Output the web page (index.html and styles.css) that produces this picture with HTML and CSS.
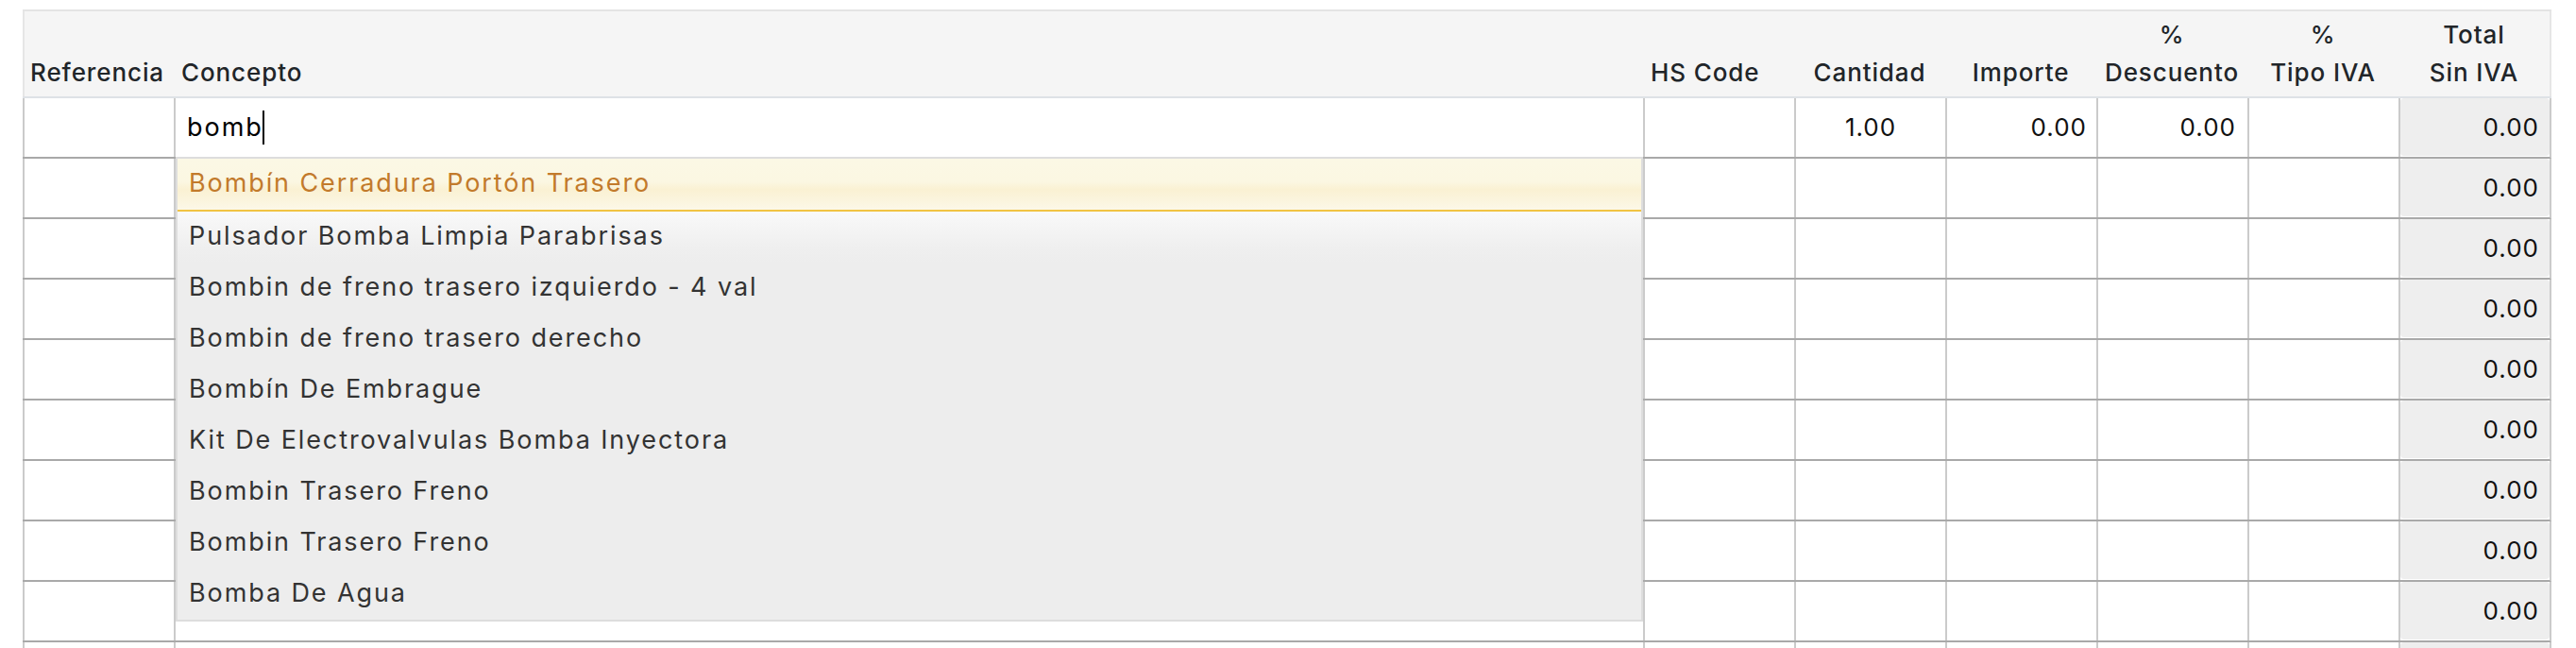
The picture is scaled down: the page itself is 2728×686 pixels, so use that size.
FILE: index.html
```html
<!DOCTYPE html>
<html lang="es">
<head>
<meta charset="utf-8">
<title>Líneas</title>
<link rel="stylesheet" href="styles.css">
</head>
<body>
<div class="page">
  <div class="grid head">
    <div class="th left">Referencia</div>
    <div class="th left">Concepto</div>
    <div class="th left">HS Code</div>
    <div class="th">Cantidad</div>
    <div class="th">Importe</div>
    <div class="th">%<br>Descuento</div>
    <div class="th">%<br>Tipo IVA</div>
    <div class="th">Total<br>Sin IVA</div>
  </div>

  <div class="grid row">
    <div class="td"></div>
    <div class="td concept">
      <span class="typed">bomb</span><span class="caret"></span>
      <ul class="dropdown">
        <li class="opt active">Bombín Cerradura Portón Trasero</li>
        <li class="opt next">Pulsador Bomba Limpia Parabrisas</li>
        <li class="opt">Bombin de freno trasero izquierdo - 4 val</li>
        <li class="opt">Bombin de freno trasero derecho</li>
        <li class="opt">Bombín De Embrague</li>
        <li class="opt">Kit De Electrovalvulas Bomba Inyectora</li>
        <li class="opt">Bombin Trasero Freno</li>
        <li class="opt">Bombin Trasero Freno</li>
        <li class="opt">Bomba De Agua</li>
      </ul>
    </div>
    <div class="td"></div>
    <div class="td num center">1.00</div>
    <div class="td num right pr10">0.00</div>
    <div class="td num right">0.00</div>
    <div class="td"></div>
    <div class="td total"><div class="ro">0.00</div></div>
  </div>

  <div class="grid row"><div class="td"></div><div class="td"></div><div class="td"></div><div class="td"></div><div class="td"></div><div class="td"></div><div class="td"></div><div class="td total"><div class="ro">0.00</div></div></div>
  <div class="grid row"><div class="td"></div><div class="td"></div><div class="td"></div><div class="td"></div><div class="td"></div><div class="td"></div><div class="td"></div><div class="td total"><div class="ro">0.00</div></div></div>
  <div class="grid row"><div class="td"></div><div class="td"></div><div class="td"></div><div class="td"></div><div class="td"></div><div class="td"></div><div class="td"></div><div class="td total"><div class="ro">0.00</div></div></div>
  <div class="grid row"><div class="td"></div><div class="td"></div><div class="td"></div><div class="td"></div><div class="td"></div><div class="td"></div><div class="td"></div><div class="td total"><div class="ro">0.00</div></div></div>
  <div class="grid row"><div class="td"></div><div class="td"></div><div class="td"></div><div class="td"></div><div class="td"></div><div class="td"></div><div class="td"></div><div class="td total"><div class="ro">0.00</div></div></div>
  <div class="grid row"><div class="td"></div><div class="td"></div><div class="td"></div><div class="td"></div><div class="td"></div><div class="td"></div><div class="td"></div><div class="td total"><div class="ro">0.00</div></div></div>
  <div class="grid row"><div class="td"></div><div class="td"></div><div class="td"></div><div class="td"></div><div class="td"></div><div class="td"></div><div class="td"></div><div class="td total"><div class="ro">0.00</div></div></div>
  <div class="grid row"><div class="td"></div><div class="td"></div><div class="td"></div><div class="td"></div><div class="td"></div><div class="td"></div><div class="td"></div><div class="td total"><div class="ro">0.00</div></div></div>
  <div class="grid row"><div class="td"></div><div class="td"></div><div class="td"></div><div class="td"></div><div class="td"></div><div class="td"></div><div class="td"></div><div class="td total"><div class="ro"></div></div></div>
</div>
</body>
</html>
```
FILE: styles.css
```css
html, body {
  margin: 0;
  padding: 0;
  background: #ffffff;
}
body {
  font-family: Inter, "Open Sans", sans-serif;
  color: #000;
}
.page {
  padding: 10px 0 0 24px;
  height: 676px;
  overflow: hidden;
}
.grid {
  display: grid;
  grid-template-columns: 160px 1556px repeat(6, 160px);
  width: 2678px;
  box-sizing: border-box;
}
.head {
  background: #f5f5f5;
  border-top: 2px solid #e4e4e4;
  border-bottom: 2px solid #dee2e6;
  box-shadow: inset 2px 0 0 #e6e6e6, inset -2px 0 0 #e6e6e6;
  height: 94px;
}
.th {
  display: flex;
  flex-direction: column;
  justify-content: flex-end;
  align-items: center;
  text-align: center;
  font-size: 26px;
  font-weight: 500;
  line-height: 40px;
  letter-spacing: 0.9px;
  color: #212529;
  padding: 0 4px 5px;
}
.th.left {
  align-items: flex-start;
  text-align: left;
  padding-left: 8px;
}
.row {
  border-right: 2px solid #cbcbcb;
  border-bottom: 2px solid #a9a9a9;
  height: 64px;
}
.td {
  border-left: 2px solid #cbcbcb;
  height: 62px;
  font-size: 26px;
  line-height: 62px;
  letter-spacing: 1px;
  color: #111;
  box-sizing: border-box;
}
.num.center { text-align: center; }
.num.right { text-align: right; padding-right: 12px; }
.num.right.pr10 { padding-right: 10px; }
.total { padding: 0; }
.ro {
  height: 61px;
  background: #eeeeee;
  border-radius: 4px;
  text-align: right;
  padding-right: 11px;
}
.concept {
  position: relative;
  padding-left: 12px;
  display: flex;
  align-items: center;
}
.typed {
  font-size: 27px;
  letter-spacing: 2px;
  color: #000;
}
.caret {
  display: inline-block;
  width: 2px;
  height: 36px;
  background: #000;
  margin-left: -1px;
}
.dropdown {
  position: absolute;
  left: 0;
  top: 100%;
  width: 1554px;
  box-sizing: border-box;
  margin: 0;
  padding: 0;
  list-style: none;
  background: #ededed;
  border: 2px solid #dddddd;
  z-index: 5;
}
.opt {
  height: 54px;
  box-sizing: border-box;
  padding: 0 0 2px 12px;
  line-height: 52px;
  font-size: 27px;
  letter-spacing: 1.9px;
  color: #333333;
  white-space: nowrap;
}
.opt.active {
  height: 56px;
  color: #c27a2b;
  background: linear-gradient(to bottom, #fbf8e5 0%, #fbf7e2 45%, #faf1d3 60%, #fbf5df 85%, #fcf8e8 100%);
  border-bottom: 2px solid #f1c342;
}
.opt.next {
  background: linear-gradient(to bottom, #f9f9f9 0%, #efefef 70%, #ededed 100%);
}
```
